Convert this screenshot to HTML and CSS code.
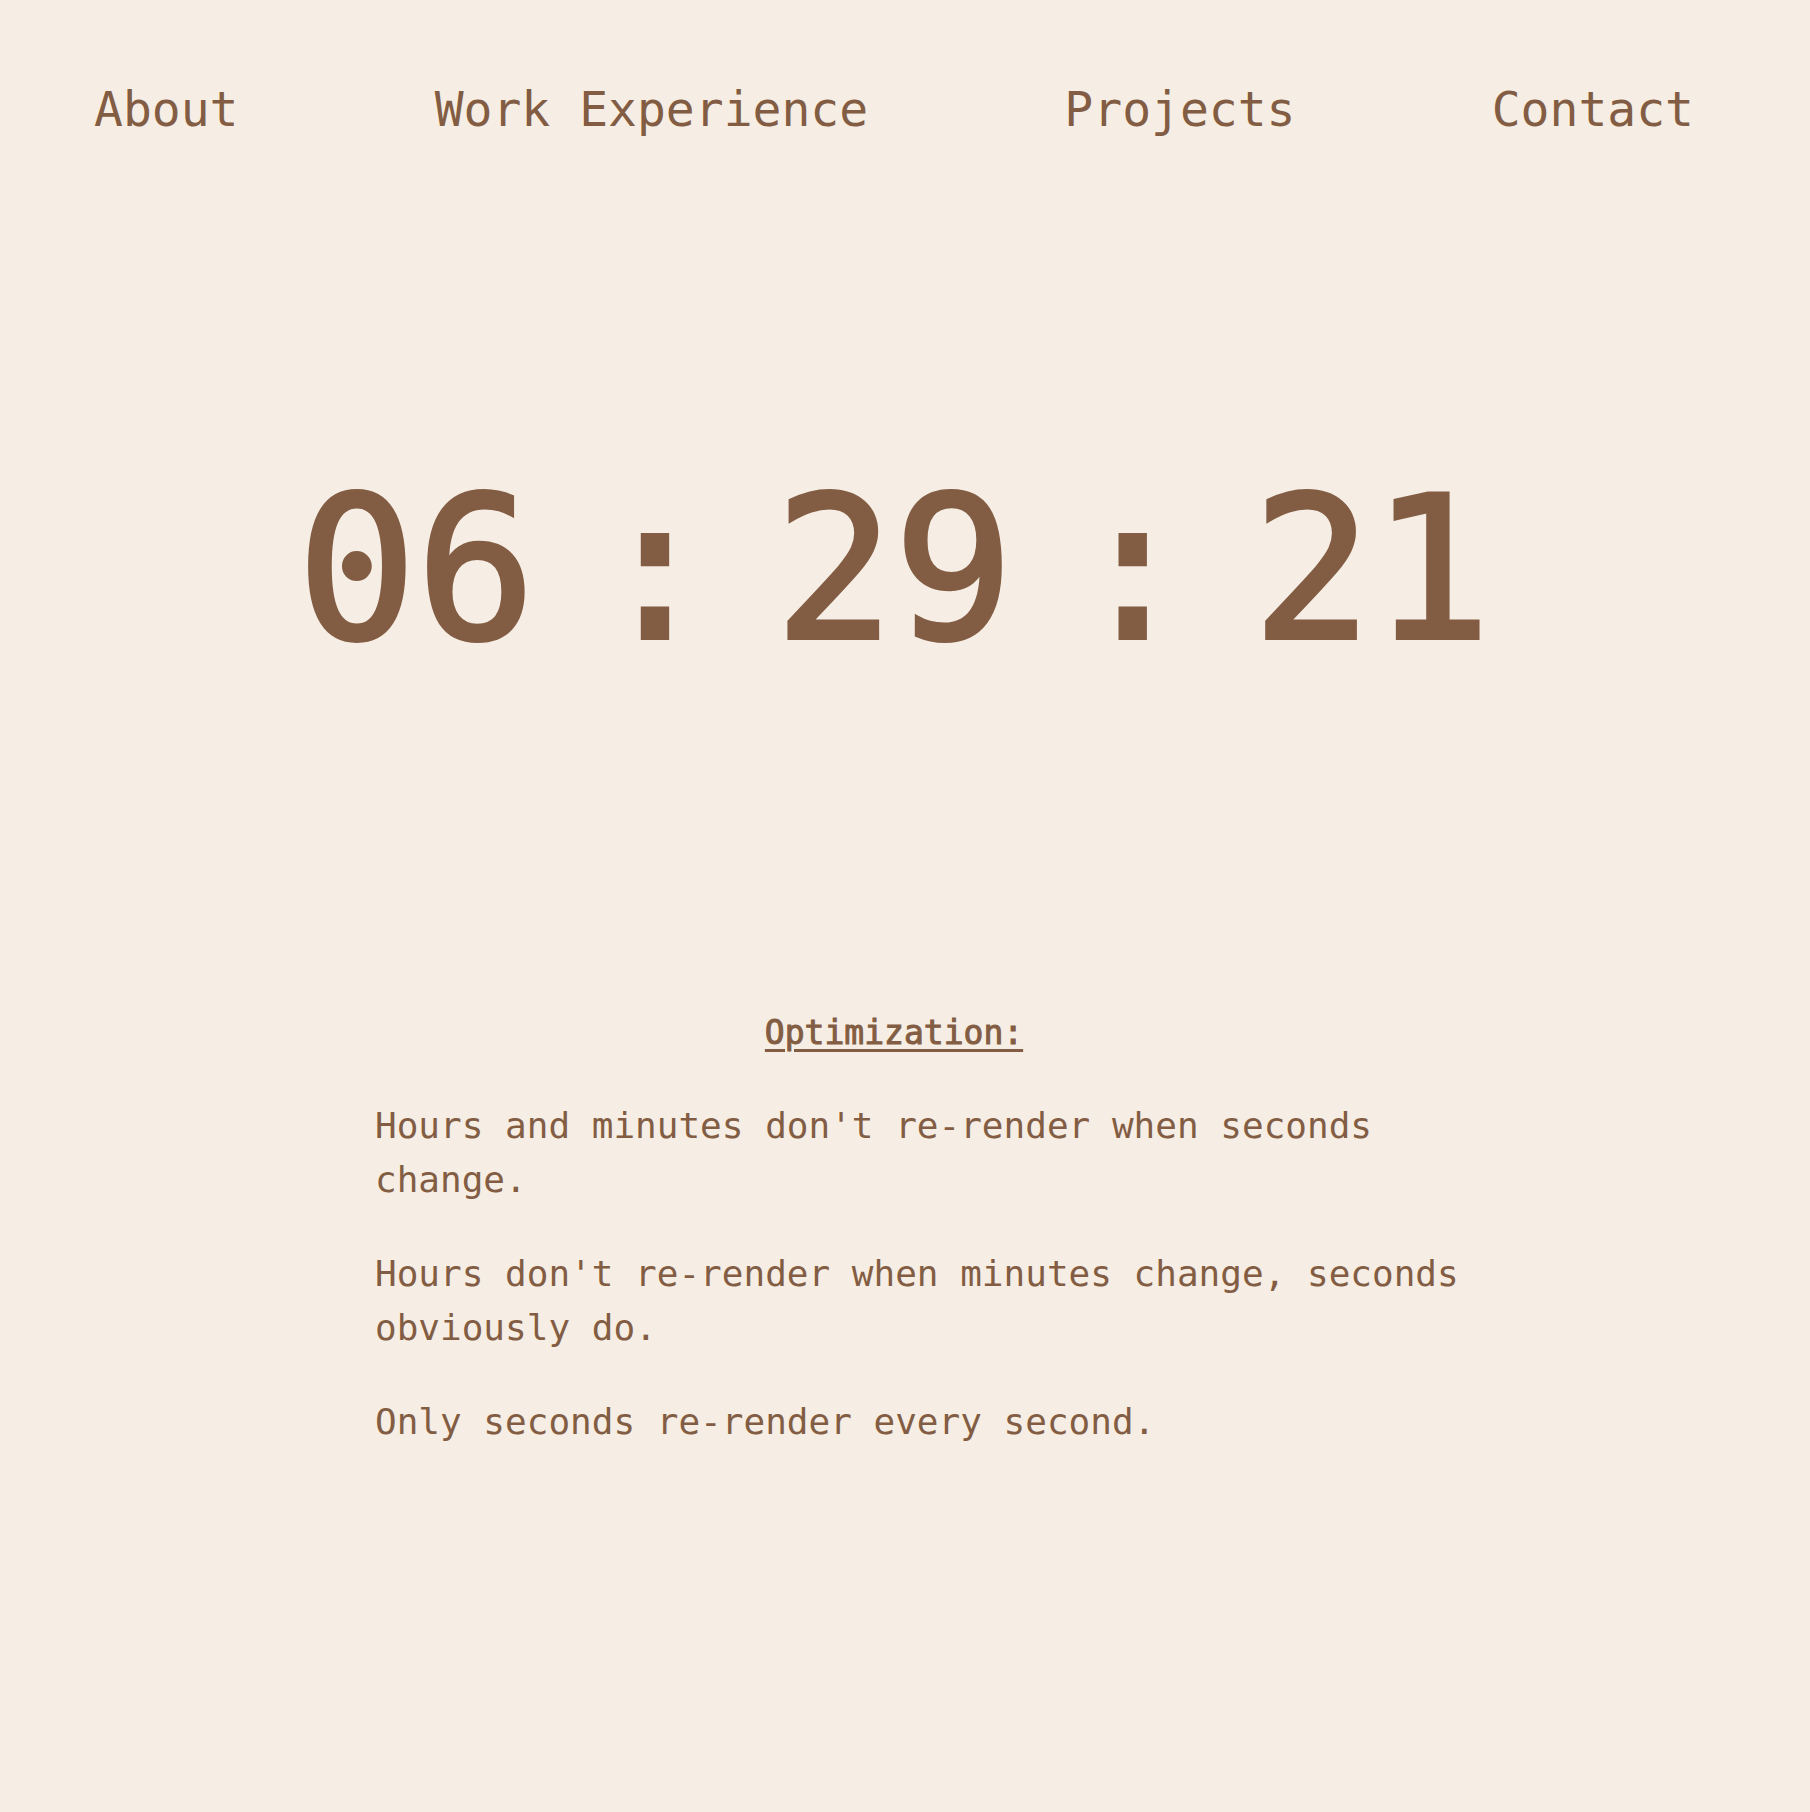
FILE: index.html
```html
<!DOCTYPE html>
<html lang="en">
<head>
<meta charset="utf-8">
<meta name="viewport" content="width=device-width, initial-scale=1">
<title>Clock</title>
<link rel="stylesheet" href="styles.css">
</head>
<body>
<nav class="nav">
  <a href="#about">About</a>
  <a href="#work">Work Experience</a>
  <a href="#projects">Projects</a>
  <a href="#contact">Contact</a>
</nav>
<main>
  <div class="clock" role="timer">
    <span>06</span><span>:</span><span>29</span><span>:</span><span>21</span>
  </div>
  <section class="notes">
    <h2>Optimization:</h2>
    <p>Hours and minutes don't re-render when seconds change.</p>
    <p>Hours don't re-render when minutes change, seconds obviously do.</p>
    <p>Only seconds re-render every second.</p>
  </section>
</main>
</body>
</html>
```
FILE: styles.css
```css
* {
  box-sizing: border-box;
}

body {
  margin: 0;
  padding-right: 22px;
  min-height: 100vh;
  background: #f6ede4;
  color: #825d43;
  font-family: "DejaVu Sans Mono", monospace;
}

.nav {
  display: flex;
  justify-content: space-between;
  padding: 73px 94px 0;
  font-size: 48px;
  line-height: 72px;
}

.nav a {
  color: inherit;
  text-decoration: none;
}

.clock {
  display: flex;
  justify-content: center;
  gap: 60px;
  margin-top: 272px;
  font-size: 198px;
  line-height: 306px;
  -webkit-text-stroke: 4px #825d43;
}

.notes {
  max-width: 1146px;
  margin: 0 auto;
  padding-top: 286px;
  font-size: 36px;
  line-height: 54px;
}

.notes h2 {
  margin: 0 0 42px;
  font-size: 33px;
  font-weight: 400;
  line-height: 48px;
  text-align: center;
  text-decoration: underline;
  text-decoration-thickness: 3px;
  text-underline-offset: 5px;
  -webkit-text-stroke: 1px #825d43;
}

.notes p {
  margin: 0 0 40px;
  padding-left: 54px;
}
```
